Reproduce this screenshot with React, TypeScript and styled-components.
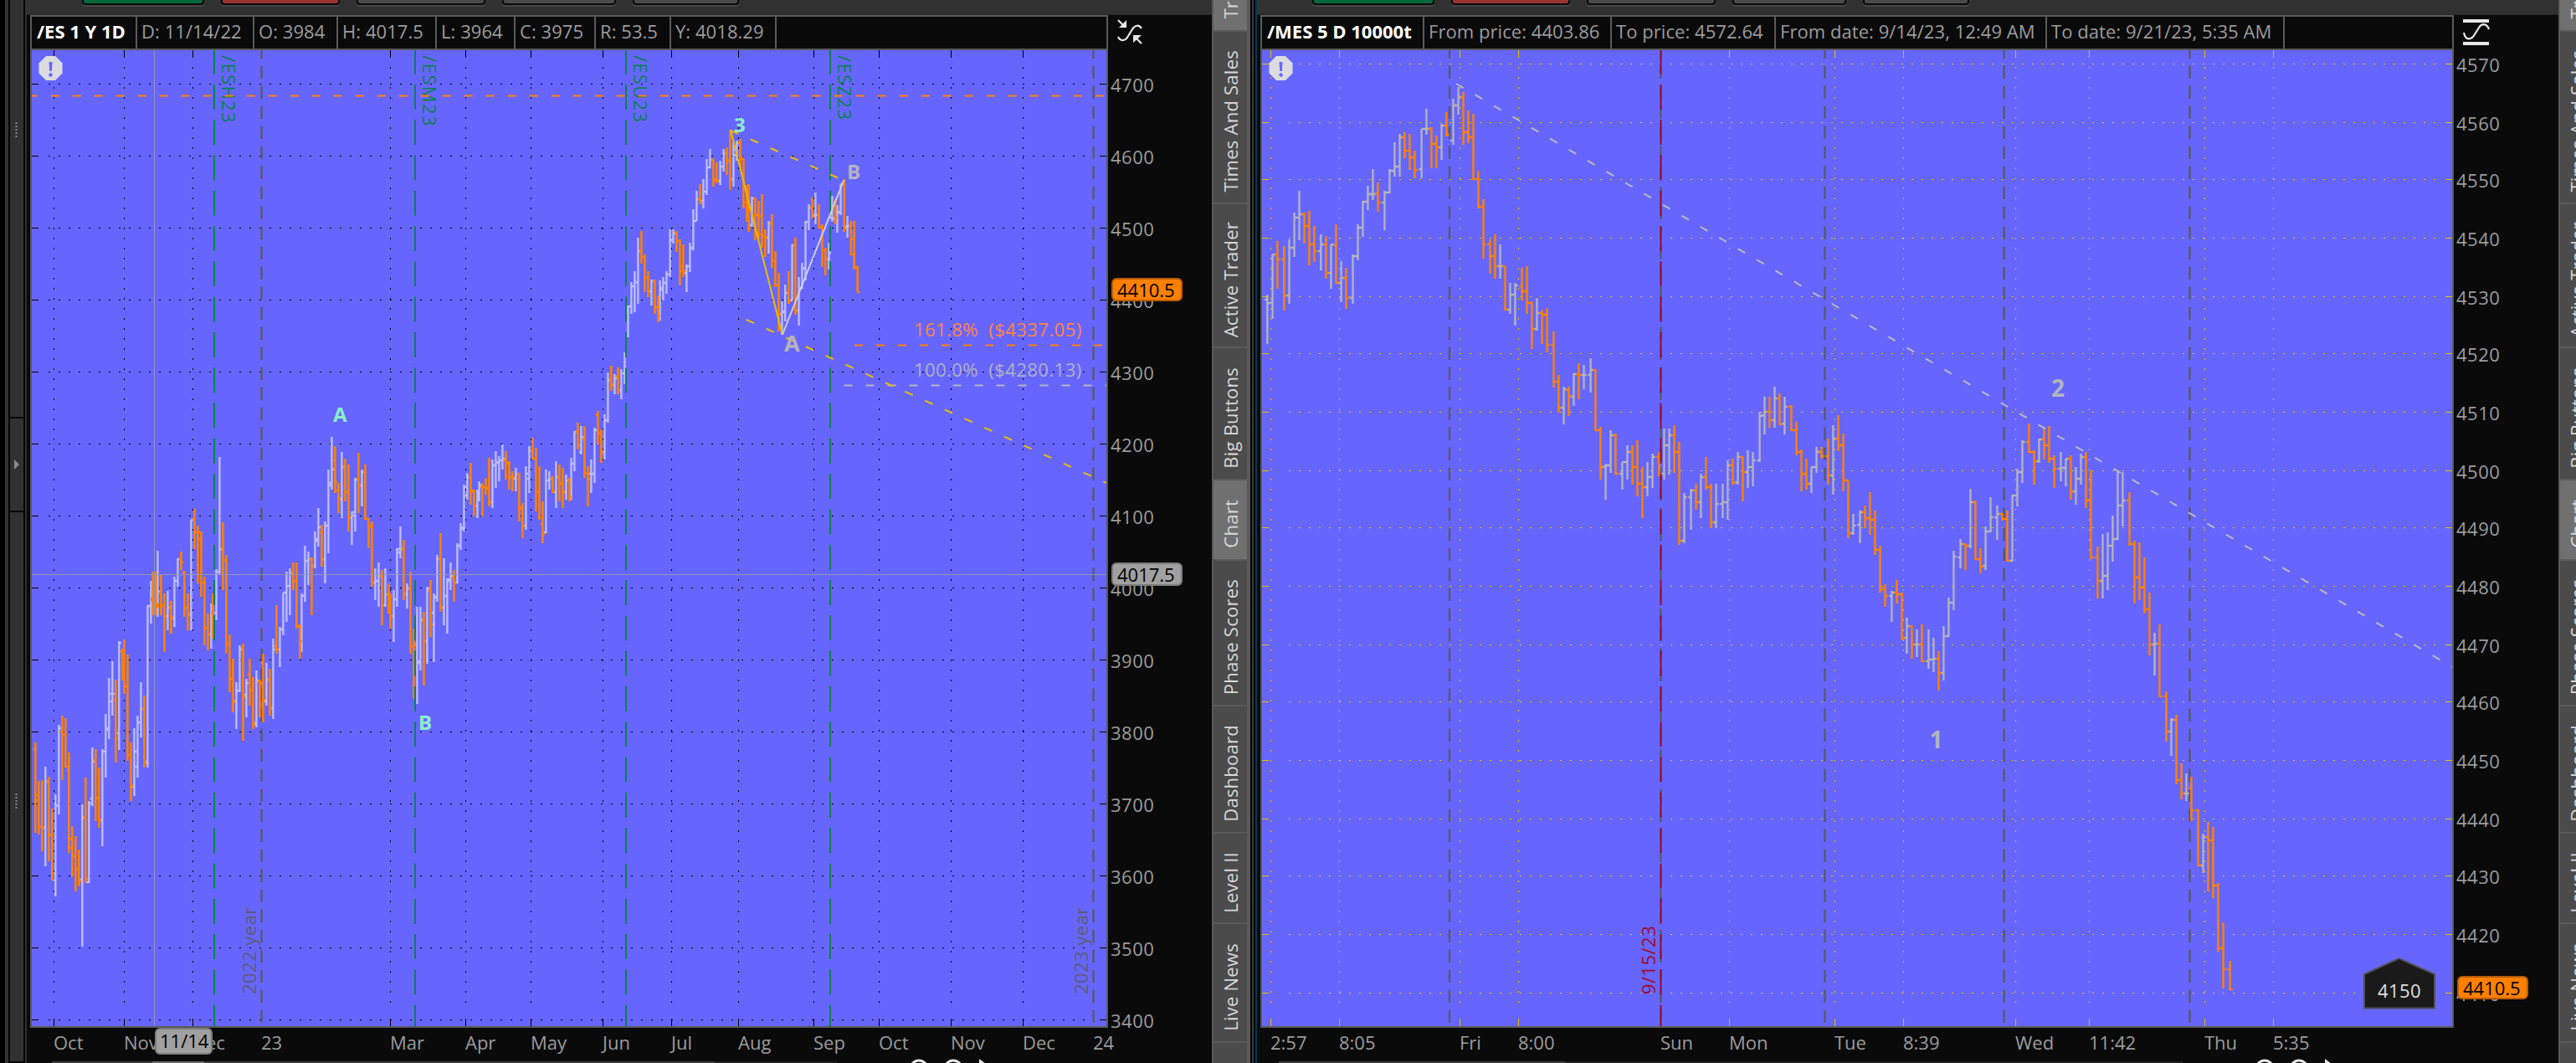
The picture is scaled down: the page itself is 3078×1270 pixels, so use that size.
import React from 'react';
import styled, { createGlobalStyle } from 'styled-components';

const FONT = '"Open Sans", "Noto Sans", sans-serif';
const PLOT_BG = '#6666ff';
const ORANGE = '#ff8000';
const LINE = '#5a5a5a';

const Global = createGlobalStyle`
  html, body { margin: 0; padding: 0; background: #0a0a0a; }
  body { font-family: ${FONT}; overflow: hidden; }
  * { box-sizing: border-box; }
`;

/* ---------- data ---------- */

// x, high, low, open, close in plot pixels; prefix of each row: u = up bar, d = down bar
const ES_BARS = `
d42.3 887 995 895 950;d46.3 933 997 956 988;d50.3 932 1017 988 988;u54.3 916 1035 989 934;d58.3 928 1029 934 997;d62.3 966 1052 998 1043
u66.3 949 1071 1052 963;u70.3 866 973 962 870;d74.3 855 932 874 878;d78.3 858 917 878 916;d82.3 899 1019 920 1002;d86.3 987 1047 1013 1023
d90.3 999 1065 1023 1038;d94.3 1015 1059 1039 1052;u98.3 961 1131 1051 977;d102.3 929 1055 977 1050;u106.3 957 1055 1054 960;u110.3 893 963 954 910
d114.3 895 981 908 953;d118.3 917 989 954 980;u122.3 895 1011 980 898;u126.3 853 929 898 870;u130.3 810 883 872 829;u134.3 790 855 838 829
d138.3 812 911 836 882;u142.3 766 896 876 768;d146.3 775 813 778 803;d148.4 764 829 803 820;d152.4 782 909 820 902;d156.4 887 957 902 939
u160.4 870 951 940 898;u164.4 855 929 916 863;u168.4 815 881 863 847;d172.4 831 917 847 912;u176.4 723 917 910 724;u180.4 694 745 724 716
u188.4 658 737 724 707;d192.4 687 735 708 723;d196.4 709 779 724 736;u200.4 706 753 736 726;d204.4 718 757 726 738;u208.4 689 749 738 694
u212.4 667 701 694 668;d216.4 659 681 668 672;d220.4 682 737 684 726;d224.4 709 753 726 734;u228.4 621 753 734 621;d232.4 608 656 620 636
d236.4 628 697 636 644;d240.4 635 713 636 696;d244.4 689 771 696 750;d248.4 733 777 750 758;u252.4 721 775 758 732;d254.5 709 763 732 760
u258.5 680 741 732 683;u262.4 546 687 683 656;d266.4 624 705 655 669;d270.4 663 781 669 769;d274.4 758 827 769 811;d278.4 787 851 811 838
u282.4 815 871 838 825;u286.4 771 827 825 776;d290.4 769 885 774 832;u294.4 811 857 830 816;d298.4 787 843 806 825;d302.4 809 871 825 866
u306.4 801 869 864 813;d310.4 812 857 814 816;d314.4 781 863 792 836;u318.4 792 843 838 812;d322.4 799 855 812 846;u326.4 763 859 846 776
d330.4 723 781 772 776;u334.4 749 797 776 752;u338.4 708 759 752 708;u342.4 683 743 708 700;u346.4 679 735 700 685;d350.4 672 705 685 694
d354.4 672 751 694 748;d358.4 746 787 748 766;u360.4 709 779 766 712;u364.4 652 719 712 670;u368.4 659 699 670 668;d372.4 666 735 668 676
u376.4 635 679 676 644;u380.4 607 653 646 630;d384.4 627 677 636 668;u388.4 623 697 668 628;u392.4 561 661 628 577;u396.4 522 585 580 561
d400.4 533 589 550 576;d404.4 577 613 586 596;u408.4 540 619 596 558;d412.4 548 599 558 588;d416.4 555 635 588 618;u420.4 611 651 618 612
u424.4 571 635 616 573;d428.4 541 613 572 580;u432.4 561 605 580 564;d436.4 555 621 564 620;d440.4 619 655 620 629;d444.4 623 701 628 696
u448.4 679 717 696 694;u452.4 672 725 694 688;d456.4 681 747 688 723;u460.4 679 725 723 710;d464.4 697 733 710 728;d466.5 709 751 728 736
u470.4 705 767 736 716;u474.4 655 725 716 656;u478.4 629 667 660 656;d482.4 645 717 656 710;u486.4 697 727 710 703;d490.4 683 781 704 772
d494.4 751 835 772 770;u498.4 725 841 770 792;u502.4 725 801 790 741;d506.4 731 819 742 766;u510.4 701 793 766 703;d514.4 693 761 706 746
u518.4 709 791 732 713;u522.4 663 719 714 668;d526.4 637 731 668 726;u530.4 667 747 726 712;u534.4 691 757 712 692;u538.4 672 705 694 688
d542.4 681 719 690 696;u546.4 649 697 696 652;u550.4 625 657 652 630;u554.4 579 635 632 582;u558.4 565 597 592 570;d562.4 553 603 570 586
d566.4 585 617 587 604;u570.4 585 619 604 590;u572.6 575 599 590 580;d576.4 577 617 582 582;d580.4 571 591 582 583;d584.4 547 605 584 600
u588.4 549 607 600 556;u592.4 539 583 556 553;u596.4 545 575 552 550;u600.4 531 561 550 548;d604.4 539 573 550 553;d608.4 551 585 554 570
d612.4 563 587 570 570;u616.4 559 587 572 566;d620.4 565 623 566 608;d624.4 601 643 606 628;u628.4 557 633 628 566;u632.4 533 589 572 538
d636.4 523 549 538 548;d640.4 535 611 548 588;d644.4 557 621 588 618;d648.4 599 649 626 638;u652.4 561 637 636 574;u656.4 563 585 574 572
d660.4 569 589 572 587;u664.4 551 607 588 570;d668.4 555 599 570 577;d672.4 559 607 578 588;u676.4 567 597 588 574;d680.4 571 599 574 594
u682.5 547 597 594 554;u686.4 515 563 554 516;d690.4 505 537 516 532;u694.4 509 543 540 522;d698.4 509 571 524 565;d702.4 557 605 565 572
u706.4 549 589 566 566;u710.4 511 577 566 514;d714.4 491 531 496 518;d718.4 513 553 518 540;u722.4 495 549 540 502;u726.4 445 505 502 454
d730.4 437 467 454 460;u734.4 447 471 460 452;d738.4 439 471 450 466;u742.4 441 477 466 446;u746.4 421 459 446 440;u750.4 365 403 367 366
u754.4 337 375 366 342;u758.4 324 373 342 337;u762.4 284 363 337 300;d766.4 276 315 300 307;d770.4 304 349 307 332;d774.4 324 355 332 347
u778.4 334 365 348 336;d782.4 334 375 336 367;d786.4 353 385 367 378;u788.5 335 383 378 344;u792.4 331 359 346 338;u796.4 324 351 338 328
u800.6 274 331 328 287;u804.5 274 291 286 279;d808.4 276 301 278 288;d812.4 286 341 288 324;d816.4 292 331 318 324;u820.4 316 349 326 318
u824.4 290 325 318 296;u828.4 250 299 297 264;u832.4 228 264 264 238;d836.5 220 244 238 243;u840.4 214 249 240 229;u844.5 190 233 229 200
u848.4 178 201 200 191;d852.4 190 223 191 215;d856.4 194 219 214 216;u860.6 192 221 216 199;u864.7 178 205 199 183;d868.4 176 209 183 192
d872.4 155 227 191 215;u876.4 170 223 214 185;u880.3 168 192 185 171;d884.4 166 201 171 187;d888.4 190 249 190 242;d892.4 221 265 242 253
d894.6 220 277 253 273;u898.5 235 271 269 237;d902.4 236 287 237 257;d906.4 240 286 257 280;d910.4 232 296 258 282;d914.3 274 307 282 284
u918.4 264 303 284 267;d922.4 256 320 267 312;d926.4 300 343 312 341;d930.4 326 396 341 376;u934.4 360 400 375 373;u938.2 340 384 372 350
d942.3 324 363 349 360;u946.5 292 359 359 293;d950.4 284 376 292 372;u954.5 331 389 371 345;u958.4 314 345 344 321;u962.5 264 335 320 265
u966.4 244 275 265 248;d970.5 236 261 248 259;u974.4 230 268 257 257;d978.5 244 273 256 271;d982.4 268 319 272 299;d986.3 296 329 299 309
u990.4 290 322 309 302;u994.4 234 265 260 261;d998.2 238 268 241 260;u1000.4 245 278 260 253;u1004.5 220 257 254 220;d1008.7 214 277 220 273
u1012.6 258 284 271 270;d1016.8 264 305 270 304;d1020.6 264 322 286 319;d1024.6 318 349 319 349`;

const MES_BARS = `
u1514.3 352 411 358 362;u1520.5 304 381 362 304;d1526.3 288 345 304 310;d1534.3 294 371 310 353;u1540.5 286 363 353 296;u1546.5 254 307 296 260
u1552.5 228 287 260 256;d1558.4 254 291 256 270;d1564.4 252 317 270 292;d1570.4 270 313 292 300;u1578.3 280 323 300 292;d1584.4 282 333 292 326
u1590.4 292 345 326 292;d1596.4 268 339 293 338;u1602.6 312 361 338 332;d1608.4 320 369 332 356;u1616.5 304 363 356 306;u1622.5 268 311 306 272
u1628.4 240 283 272 241;u1634.4 222 251 241 232;u1640.4 202 239 232 232;d1646.4 218 253 231 242;u1654.4 228 275 242 230;u1660.4 202 231 230 204
u1666.4 170 211 204 199;u1672.5 160 211 199 164;d1678.3 158 189 164 180;d1684.4 160 203 180 188;d1690.4 180 213 188 203;u1698.6 154 213 202 154
u1704.4 130 161 154 154;d1710.4 152 201 154 172;d1716.4 162 201 172 176;u1722.5 148 191 176 150;d1728.3 134 163 150 161;u1736.4 118 173 168 126
u1742.5 104 137 126 116;d1748.5 110 173 116 158;d1754.4 132 171 158 164;d1760.4 136 215 164 214;d1766.4 204 249 214 247;d1772.5 238 309 247 292
d1780.4 286 327 292 306;d1786.4 280 333 306 318;u1792.5 292 333 318 318;d1798.5 318 371 318 370;u1804.4 338 375 370 352;u1810.4 338 389 352 341
d1818.5 320 359 342 348;d1824.5 318 375 348 362;d1830.4 360 417 362 393;u1836.4 356 395 393 374;d1842.5 370 411 374 376;d1848.5 368 421 376 412
d1856.4 396 463 412 456;d1862.4 448 493 456 487;u1868.5 462 507 487 465;d1874.5 462 497 466 473;u1880.4 446 485 474 447;d1886.4 434 477 447 448
u1892.5 436 465 448 448;u1900.6 428 469 448 442;d1906.4 441 515 442 514;d1912.4 510 573 514 558;u1918.5 554 597 558 556;u1924.5 514 565 556 520
d1930.4 518 567 520 566;u1938.4 552 585 566 552;u1944.5 532 573 552 540;d1950.5 532 579 540 558;d1956.4 526 593 558 578;d1962.4 558 619 578 582
u1968.5 552 593 582 570;u1974.5 542 583 570 546;d1982.4 540 569 546 568;u1988.4 512 573 566 532;u1994.5 512 567 532 520;d2000.5 508 565 520 540
d2006.4 528 651 540 646;u2012.4 589 649 646 594;u2020.5 584 633 594 586;d2026.5 578 609 586 600;u2032.4 566 619 600 570;d2038.4 546 585 570 582
d2044.5 578 631 582 624;u2050.5 578 631 624 602;u2058.4 578 619 602 600;u2064.4 550 621 600 556;d2070.5 548 579 556 577;u2076.5 540 579 576 546
d2082.4 546 599 546 564;u2088.4 538 583 564 558;u2094.5 540 581 558 550;u2102.6 492 552 550 497;u2108.4 474 519 496 492;d2114.4 474 511 492 502
u2120.5 462 511 502 476;d2126.4 470 508 476 507;u2132.4 474 519 506 486;d2140.4 484 515 486 514;d2146.5 504 544 514 540;d2152.5 537 587 540 566
d2158.4 548 585 566 578;u2164.4 558 589 578 558;u2170.5 534 565 558 540;d2176.5 534 548 540 545;d2184.4 524 579 545 568;u2190.4 508 591 568 524
d2196.5 496 539 524 532;d2202.5 518 587 532 574;d2208.4 574 643 574 637;u2214.4 614 639 637 628;u2222.5 610 649 627 612;d2228.4 604 631 612 619
d2234.4 588 639 619 621;d2240.4 610 663 621 657;d2246.5 652 708 657 704;d2252.5 698 725 704 712;u2260.4 706 743 712 708;d2266.4 693 721 708 710
d2272.5 708 765 710 762;u2278.4 738 781 762 748;d2284.4 748 787 748 770;u2290.5 752 785 770 770;d2296.4 746 791 770 790;u2304.4 752 799 790 788
u2310.4 762 803 788 787;d2316.5 778 825 787 804;u2322.4 748 813 804 760;u2328.4 714 761 760 720;u2334.4 658 729 720 665;u2342.5 644 679 666 650
d2348.5 650 681 650 652;u2354.4 584 655 652 600;d2360.4 598 669 600 668;d2366.4 655 685 668 677;u2372.5 629 681 676 635;u2378.5 594 636 635 618
u2386.4 604 645 618 614;d2392.4 613 622 614 620;d2398.4 610 671 620 670;u2404.5 591 671 670 592;u2410.4 560 605 592 564;u2416.4 526 577 564 528
d2424.4 506 541 528 540;d2430.5 538 579 540 551;u2436.5 524 553 551 525;d2442.4 511 549 525 532;d2448.4 509 553 532 548;d2454.5 544 583 548 560
u2462.5 540 575 560 559;u2468.4 548 581 559 548;d2474.4 544 597 548 587;u2480.4 558 603 587 572;u2486.5 542 579 572 546;d2492.5 540 607 546 598
d2498.4 562 668 598 666;d2506.4 653 715 666 694;u2512.4 638 715 694 688;u2518.5 636 705 688 652;u2524.4 616 671 652 644;u2530.4 562 645 644 604
u2536.4 564 629 604 598;d2544.5 588 652 598 650;d2550.5 646 721 650 690;d2556.4 648 717 690 702;d2562.4 666 733 702 728;d2568.4 708 783 728 770
u2574.5 756 807 770 769;d2580.4 746 833 769 832;d2588.4 826 886 832 874;u2594.4 858 903 874 860;d2600.5 854 937 860 932;d2606.5 912 955 932 948
u2612.4 924 957 948 948;d2618.4 928 981 942 968;d2626.5 967 1035 968 1034;u2632.5 996 1043 1034 1000;d2638.4 982 1065 1000 1004;d2644.4 988 1073 1004 1058
d2650.4 1055 1137 1058 1133;d2656.5 1102 1181 1133 1158;d2664.5 1148 1183 1158 1182`;

function barPaths(raw: string, tick: number) {
  const out = { u: '', d: '' };
  raw
    .trim()
    .split(/[;\n]+/)
    .forEach((row) => {
      const kind = row[0] as 'u' | 'd';
      const [x, h, l, o, c] = row.slice(1).split(' ').map(Number);
      out[kind] += `M${x} ${h}V${l}M${x - tick} ${o}H${x}M${x} ${c}H${x + tick}`;
    });
  return out;
}

type Tick = { at: number; label: string };

const ES_PRICES: Tick[] = Array.from({ length: 14 }, (_, i) => ({
  at: Math.round(100.2 + i * 86.02),
  label: String(4700 - i * 100),
}));
const MES_PRICES: Tick[] = [76, 146, 214, 284, 354, 422, 492, 562, 630, 700, 770, 838, 908, 978, 1046, 1116, 1186].map(
  (at, i) => ({ at, label: String(4570 - i * 10) }),
);
const ES_TIMES: Tick[] = [
  [64, 'Oct'], [148, 'Nov'], [230, 'Dec'], [312, '23'], [466, 'Mar'], [556, 'Apr'], [634, 'May'], [720, 'Jun'],
  [802, 'Jul'], [882, 'Aug'], [972, 'Sep'], [1050, 'Oct'], [1136, 'Nov'], [1222, 'Dec'], [1306, '24'],
].map(([at, label]) => ({ at: at as number, label: label as string }));
const MES_TIMES: Tick[] = [
  [1518, '2:57'], [1600, '8:05'], [1744, 'Fri'], [1814, '8:00'], [1984, 'Sun'], [2066, 'Mon'],
  [2192, 'Tue'], [2274, '8:39'], [2408, 'Wed'], [2496, '11:42'], [2634, 'Thu'], [2716, '5:35'],
].map(([at, label]) => ({ at: at as number, label: label as string }));

const CONTRACTS: [number, string, number][] = [
  [265, '/ESH23', 80.5],
  [505, '/ESM23', 84.5],
  [757, '/ESU23', 80],
  [1001, '/ESZ23', 77],
];

const TABS = [
  { label: 'Tr', h: 36, active: true },
  { label: 'Times And Sales', h: 204 },
  { label: 'Active Trader', h: 170 },
  { label: 'Big Buttons', h: 156 },
  { label: 'Chart', h: 94, active: true },
  { label: 'Phase Scores', h: 172 },
  { label: 'Dashboard', h: 150 },
  { label: 'Level II', h: 106 },
  { label: 'Live News', h: 140 },
  { label: '', h: 24 },
];

/* ---------- layout ---------- */

const Screen = styled.div`
  display: flex;
  width: 3078px;
  height: 1270px;
  overflow: hidden;
  background: #0a0a0a;
  color: #9c9c9c;
  font-size: 22px;
  line-height: 30px;
`;
const Strip = styled.div<{ $w: number; $c: string }>`
  flex: none;
  width: ${(p) => p.$w}px;
  background: ${(p) => p.$c};
`;
const Sidebar = styled.div`
  flex: none;
  display: flex;
  flex-direction: column;
  width: 20px;
  border: solid #050505;
  border-width: 0 2px;
`;
const SidebarCell = styled.div<{ $h: number }>`
  display: flex;
  flex: none;
  justify-content: center;
  align-items: center;
  height: ${(p) => p.$h}px;
  background: #313131;
  border-bottom: 2px solid #080808;
`;
const TopGrip = styled.div`
  display: flex;
  margin-top: -191px;
`;
const BottomGrip = styled.div`
  display: flex;
  margin-top: 32px;
`;
const Panel = styled.section<{ $w: number; $edge: string }>`
  display: flex;
  flex: none;
  flex-direction: column;
  width: ${(p) => p.$w}px;
  border-left: 2px solid ${(p) => p.$edge};
  background: #0a0a0a;
`;
const Toolbar = styled.div<{ $pad: number }>`
  display: flex;
  flex: none;
  gap: 20px;
  height: 18px;
  padding-left: ${(p) => p.$pad}px;
  background: #313131;
  border-bottom: 1px solid #262626;
`;
const ToolButton = styled.div<{ $w: number; $c: string }>`
  width: ${(p) => p.$w}px;
  height: 6px;
  background: ${(p) => p.$c};
  border: 2px solid #0a0a0a;
  border-top: 0;
  border-radius: 0 0 4px 4px;
  box-shadow: 0 2px 0 #474747;
`;
const Body = styled.div`
  display: flex;
  flex: none;
  height: 1210px;
  padding-left: 4px;
`;
const Frame = styled.div<{ $w: number }>`
  display: flex;
  flex: none;
  flex-direction: column;
  width: ${(p) => p.$w}px;
  border: 2px solid ${LINE};
`;
const Header = styled.div`
  display: flex;
  flex: none;
  height: 40px;
  border-bottom: 2px solid ${LINE};
  background: #0a0a0a;
`;
const Cell = styled.div<{ $w: number; $title?: boolean }>`
  flex: none;
  width: ${(p) => p.$w}px;
  padding-left: ${(p) => (p.$title ? 6 : 5)}px;
  border-right: 2px solid ${LINE};
  color: ${(p) => (p.$title ? '#ffffff' : '#9c9c9c')};
  font-weight: ${(p) => (p.$title ? 700 : 400)};
  letter-spacing: ${(p) => (p.$title ? 0 : 0.06)}px;
  line-height: 35px;
  white-space: nowrap;
`;
const Plot = styled.svg`
  display: block;
  flex: none;
  height: 1166px;
  background: ${PLOT_BG};
  font-family: ${FONT};
  font-size: 22px;
`;
const Spaced = styled.g`
  letter-spacing: 0.45px;
  text { white-space: pre; }
`;
const PriceAxis = styled.div`
  position: relative;
  flex: 1;
`;
const AxisIcon = styled.svg`
  position: absolute;
  top: 4px;
  left: 10px;
  width: 34px;
  height: 34px;
`;
const PriceLabel = styled.span`
  position: absolute;
  left: 3px;
  letter-spacing: 0.5px;
`;
const TimeAxis = styled.div`
  position: relative;
  flex: none;
  height: 40px;
`;
const TimeLabel = styled.span`
  position: absolute;
  top: 2px;
`;
const Badge = styled.span<{ $gray?: boolean; $tall?: boolean }>`
  position: absolute;
  left: 4px;
  width: ${(p) => (p.$tall ? 69 : 85)}px;
  height: ${(p) => (p.$tall ? 32 : 28)}px;
  padding-left: ${(p) => (p.$tall ? 4 : 5)}px;
  border: 2px solid ${(p) => (p.$gray ? '#7c7c7c' : '#b85c00')};
  border-radius: 6px;
  background: ${(p) => (p.$gray ? '#a0a0a0' : ORANGE)};
  color: #000;
  line-height: ${(p) => (p.$tall ? 27 : 24)}px;
`;
const ScrollStrip = styled.div<{ $pad: number }>`
  display: flex;
  flex: none;
  height: 2px;
  padding-left: ${(p) => p.$pad}px;
  background: #0a0a0a;
`;
const ZoomIcons = styled.svg`
  flex: none;
  width: 110px;
  height: 5px;
  margin: -3px 0 0 81px;
`;
const TabRail = styled.nav<{ $w: number }>`
  display: flex;
  flex: none;
  flex-direction: column;
  width: ${(p) => p.$w}px;
  height: 1270px;
  overflow: hidden;
  border-left: 2px solid ${LINE};
`;
const Tab = styled.div<{ $h: number; $active?: boolean; $end?: boolean }>`
  display: flex;
  flex: none;
  align-items: ${(p) => (p.$end ? 'flex-end' : 'center')};
  justify-content: center;
  width: 40px;
  height: ${(p) => p.$h + 2}px;
  padding: ${(p) => (p.$end ? '0 0 13px' : '10px 0 0')};
  background: ${(p) => (p.$active ? '#707070' : '#4b4b4b')};
  border-bottom: 2px solid ${LINE};
`;
const TabText = styled.span`
  writing-mode: vertical-rl;
  transform: rotate(180deg);
  color: #d8d8d8;
  letter-spacing: 0.25px;
  white-space: nowrap;
`;

/* ---------- drawing pieces ---------- */

function Grid({ x0, x1, prices, times, color, first, skip }: {
  x0: number; x1: number; prices: Tick[]; times: Tick[]; color: string; first: number; skip: number[];
}) {
  const vs = times.filter((t) => !skip.includes(t.at));
  return (
    <g stroke={color} fill="none" shapeRendering="crispEdges">
      <path strokeDasharray="2 10" d={prices.map((p) => `M${first} ${p.at + 0.5}H${x1 - 16}`).join('')} />
      <path d={prices.map((p) => `M${x0} ${p.at + 0.5}h8M${x1} ${p.at + 0.5}h-8`).join('')} />
      <path strokeDasharray="2 10" d={vs.map((t) => `M${t.at + 0.5} 80V1200`).join('')} />
      <path d={vs.map((t) => `M${t.at + 0.5} 60v9M${t.at + 0.5} 1226v-9`).join('')} />
    </g>
  );
}

function Warning({ x }: { x: number }) {
  return (
    <g transform={`translate(${x} 67)`}>
      <path d="M8.5 0h11L28 8.500v12L19.500 29h-11L0 20.500v-12z" fill="#dcdce0" />
      <path d="M12 7h4l-.7 11h-2.600z" fill={PLOT_BG} />
      <circle cx="14" cy="22.500" r="2.200" fill={PLOT_BG} />
    </g>
  );
}

function DayLines({ xs, color }: { xs: number[]; color: string }) {
  return (
    <path
      stroke={color}
      strokeWidth={2.4}
      strokeDasharray="15.500 8.500"
      strokeDashoffset={5.5}
      fill="none"
      d={xs.map((x) => `M${x} 60V1224`).join('')}
    />
  );
}

function LongLines({ xs, color }: { xs: number[]; color: string }) {
  return (
    <path
      stroke={color}
      strokeWidth={2}
      strokeDasharray="30 12.300"
      strokeDashoffset={1.5}
      fill="none"
      d={xs.map((x) => `M${x} 60V1226`).join('')}
    />
  );
}

function Side({ w }: { w: number }) {
  return (
    <TabRail $w={w}>
      {TABS.map((t, i) => (
        <Tab key={i} $h={t.h} $active={t.active} $end={i === 0}>
          <TabText>{t.label}</TabText>
        </Tab>
      ))}
    </TabRail>
  );
}

function Buttons({ pad }: { pad: number }) {
  return (
    <Toolbar $pad={pad}>
      <ToolButton $w={146} $c="#05683c" />
      <ToolButton $w={142} $c="#9a3232" />
      <ToolButton $w={154} $c="#4a4a4a" />
      <ToolButton $w={136} $c="#4a4a4a" />
      <ToolButton $w={127} $c="#4a4a4a" />
    </Toolbar>
  );
}

function Footer({ pad, parts }: { pad: number; parts: [number, string][] }) {
  return (
    <ScrollStrip $pad={pad}>
      {parts.map(([w, c], i) => (
        <Strip key={i} $w={w} $c={c} />
      ))}
      <ZoomIcons viewBox="0 0 110 5">
        <g fill="none" stroke="#e8e8e8" strokeWidth="3">
          <circle cx="17" cy="12" r="10" />
          <circle cx="58" cy="12" r="10" />
        </g>
        <path d="M89 0v6h8z" fill="#e8e8e8" />
      </ZoomIcons>
    </ScrollStrip>
  );
}

function Prices({ ticks }: { ticks: Tick[] }) {
  return (
    <>
      {ticks.map((t) => (
        <PriceLabel key={t.label} style={{ top: t.at - 32 }}>
          {t.label}
        </PriceLabel>
      ))}
    </>
  );
}

function Times({ ticks, origin }: { ticks: Tick[]; origin: number }) {
  return (
    <>
      {ticks.map((t) => (
        <TimeLabel key={t.at} style={{ left: t.at - origin }}>
          {t.label}
        </TimeLabel>
      ))}
    </>
  );
}

/* ---------- charts ---------- */

const es = barPaths(ES_BARS, 2.6);
const mes = barPaths(MES_BARS, 3.2);

function EsPlot() {
  return (
    <Plot viewBox="38 60 1284 1166" width={1284}>
      <Grid x0={38} x1={1322} prices={ES_PRICES} times={ES_TIMES} color="#000" first={58} skip={[312, 1306]} />
      <DayLines xs={[312.5, 1306.5]} color="#595966" />
      <g fill="#0b8050">
        {CONTRACTS.map(([x, s, len]) => (
          <text key={s} textLength={len} transform={`translate(${x} 66) rotate(90)`}>{s}</text>
        ))}
      </g>
      <Spaced fill="#5c5c78">
        <text transform="translate(306 1188) rotate(-90)">2022 year</text>
        <text transform="translate(1300 1188) rotate(-90)">2023 year</text>
      </Spaced>
      <path d={es.u} stroke="#bcbcff" strokeWidth={2.4} fill="none" />
      <path d={es.d} stroke={ORANGE} strokeWidth={2.6} fill="none" />
      <path d="M181.500 683h6v52h-6zM180 714h3v4h-3zM187 721h3v5h-3z" fill={ORANGE} />
      <LongLines xs={[256, 496, 748, 992]} color="#0b8050" />
      <path d="M38 686.500H1322M184.500 60V1226" stroke="#9393b4" fill="none" />
      <g fill="none" strokeWidth={2} strokeDasharray="10 16">
        <path d="M34.700 114.500H1322M1021 412.500H1322" stroke={ORANGE} />
        <path d="M1008.500 460.500H1322" stroke="#b4b4bc" />
        <path d="M873 156L1008 215.500M892 382L1322 577" stroke="#e8bc00" />
      </g>
      <path d="M873 155.500L934.800 400" stroke="#e8bc00" strokeWidth={2} />
      <path d="M934.800 400L1008.400 215" stroke="#d0d0d4" strokeWidth={2} />
      <Spaced>
        <text x="1092" y="402" fill="#ff8440">{'161.8%  ($4337.05)'}</text>
        <text x="1092" y="450" fill="#b0b0c0">{'100.0%  ($4280.13)'}</text>
      </Spaced>
      <g fontWeight={700} fontSize={24}>
        <g fill="#8cf0c8">
          <text x="398" y="504">A</text>
          <text x="500" y="872">B</text>
          <text x="877" y="158">3</text>
        </g>
        <g fill="#b4b4bc">
          <text x="937" y="419.500" fontSize={27}>A</text>
          <text x="1012" y="213.500">B</text>
        </g>
      </g>
      <Warning x={46.5} />
    </Plot>
  );
}

function MesPlot() {
  return (
    <Plot viewBox="1508 60 1422 1166" width={1422}>
      <Grid x0={1508} x1={2930} prices={MES_PRICES} times={MES_TIMES} color="#e0c000" first={1540} skip={[1984]} />
      <DayLines xs={[1732, 1984.5, 2180.5, 2394.5, 2616.5]} color="#595966" />
      <Spaced>
        <text transform="translate(1978 1188) rotate(-90)" fill="#a00a28">9/15/23</text>
      </Spaced>
      <path d={mes.u} stroke="#b4b4bc" strokeWidth={2.3} fill="none" />
      <path d={mes.d} stroke={ORANGE} strokeWidth={2.4} fill="none" />
      <LongLines xs={[1984.5]} color="#980a28" />
      <path d="M1740 100L2932 798" stroke="#b8b8bc" strokeWidth={2} strokeDasharray="10 16" />
      <g fontWeight={700} fontSize={28} fill="#b4b4bc">
        <text x="2451" y="473.500">2</text>
        <text x="2305.500" y="894">1</text>
      </g>
      <path d="M2825 1164L2866.500 1145L2909 1164V1204.500H2825z" fill="#1a1a1a" stroke="#505058" strokeWidth={2} />
      <Spaced>
        <text x="2841" y="1192" fill="#e0e0e0">4150</text>
      </Spaced>
      <Warning x={1516.5} />
    </Plot>
  );
}

export default function App() {
  return (
    <Screen>
      <Global />
      <Strip $w={6} $c="#000" />
      <Strip $w={4} $c="#313131" />
      <Sidebar>
        <SidebarCell $h={500}>
          <TopGrip>
            <svg width="4" height="20"><path d="M1.500 2v18" stroke="#8a8a8a" strokeWidth="2" strokeDasharray="2 2" /></svg>
          </TopGrip>
        </SidebarCell>
        <SidebarCell $h={112}>
          <svg width="8" height="12"><path d="M1 0v12l6-6z" fill="#8a8a8a" /></svg>
        </SidebarCell>
        <SidebarCell $h={658}>
          <BottomGrip>
            <svg width="4" height="20"><path d="M1.500 2v18" stroke="#8a8a8a" strokeWidth="2" strokeDasharray="2 2" /></svg>
          </BottomGrip>
        </SidebarCell>
      </Sidebar>

      <Panel $w={1418} $edge="#313131">
        <Buttons pad={66} />
        <Body>
          <Frame $w={1288}>
            <Header>
              <Cell $w={126} $title>/ES 1 Y 1D</Cell>
              <Cell $w={140}>D: 11/14/22</Cell>
              <Cell $w={100}>O: 3984</Cell>
              <Cell $w={118}>H: 4017.5</Cell>
              <Cell $w={94}>L: 3964</Cell>
              <Cell $w={96}>C: 3975</Cell>
              <Cell $w={90}>R: 53.5</Cell>
              <Cell $w={126}>Y: 4018.29</Cell>
            </Header>
            <EsPlot />
          </Frame>
          <PriceAxis>
            <AxisIcon viewBox="0 0 34 34" fill="none" stroke="#e8e8e8" strokeWidth="2.200">
              <path d="M2 22c3 6 9 5 12-1l5-8c3-5 8-6 11-1" />
              <path d="M2 2l8 8M30 30l-8-8" />
              <path d="M12 2v9H3zM20 20h10l-10 9z" fill="#e8e8e8" stroke="none" />
            </AxisIcon>
            <Prices ticks={ES_PRICES} />
            <Badge style={{ top: 314 }}>4410.5</Badge>
            <Badge $gray style={{ top: 654 }}>4017.5</Badge>
          </PriceAxis>
        </Body>
        <TimeAxis>
          <Times ticks={ES_TIMES} origin={32} />
          <Badge $gray $tall style={{ left: 153, top: 0 }}>11/14</Badge>
        </TimeAxis>
        <Footer pad={30} parts={[[120, '#3c3c3c'], [62, '#6a6a6a'], [610, '#3c3c3c'], [146, '#1c1c1c']]} />
      </Panel>

      <Side w={42} />
      <Strip $w={4} $c={LINE} />
      <Strip $w={2} $c="#050505" />
      <Strip $w={2} $c="#3c3c3c" />
      <Strip $w={2} $c="#050505" />

      <Panel $w={1557} $edge="#003a56">
        <Buttons pad={66} />
        <Body>
          <Frame $w={1426}>
            <Header>
              <Cell $w={194} $title>/MES 5 D 10000t</Cell>
              <Cell $w={224}>From price: 4403.86</Cell>
              <Cell $w={196}>To price: 4572.64</Cell>
              <Cell $w={324}>From date: 9/14/23, 12:49 AM</Cell>
              <Cell $w={284}>To date: 9/21/23, 5:35 AM</Cell>
            </Header>
            <MesPlot />
          </Frame>
          <PriceAxis>
            <AxisIcon viewBox="0 0 34 34" fill="none" stroke="#e8e8e8">
              <path d="M1 3h31M1 30h31" strokeWidth="4" />
              <path d="M2 17c2 10 9 9 13 2l5-8c3-5 9-6 12 2" strokeWidth="2.200" />
            </AxisIcon>
            <Prices ticks={MES_PRICES} />
            <Badge style={{ top: 1148 }}>4410.5</Badge>
          </PriceAxis>
        </Body>
        <TimeAxis>
          <Times ticks={MES_TIMES} origin={1502} />
        </TimeAxis>
        <Footer pad={26} parts={[[342, '#3c3c3c'], [738, '#1c1c1c']]} />
      </Panel>
      <Side w={21} />
    </Screen>
  );
}
